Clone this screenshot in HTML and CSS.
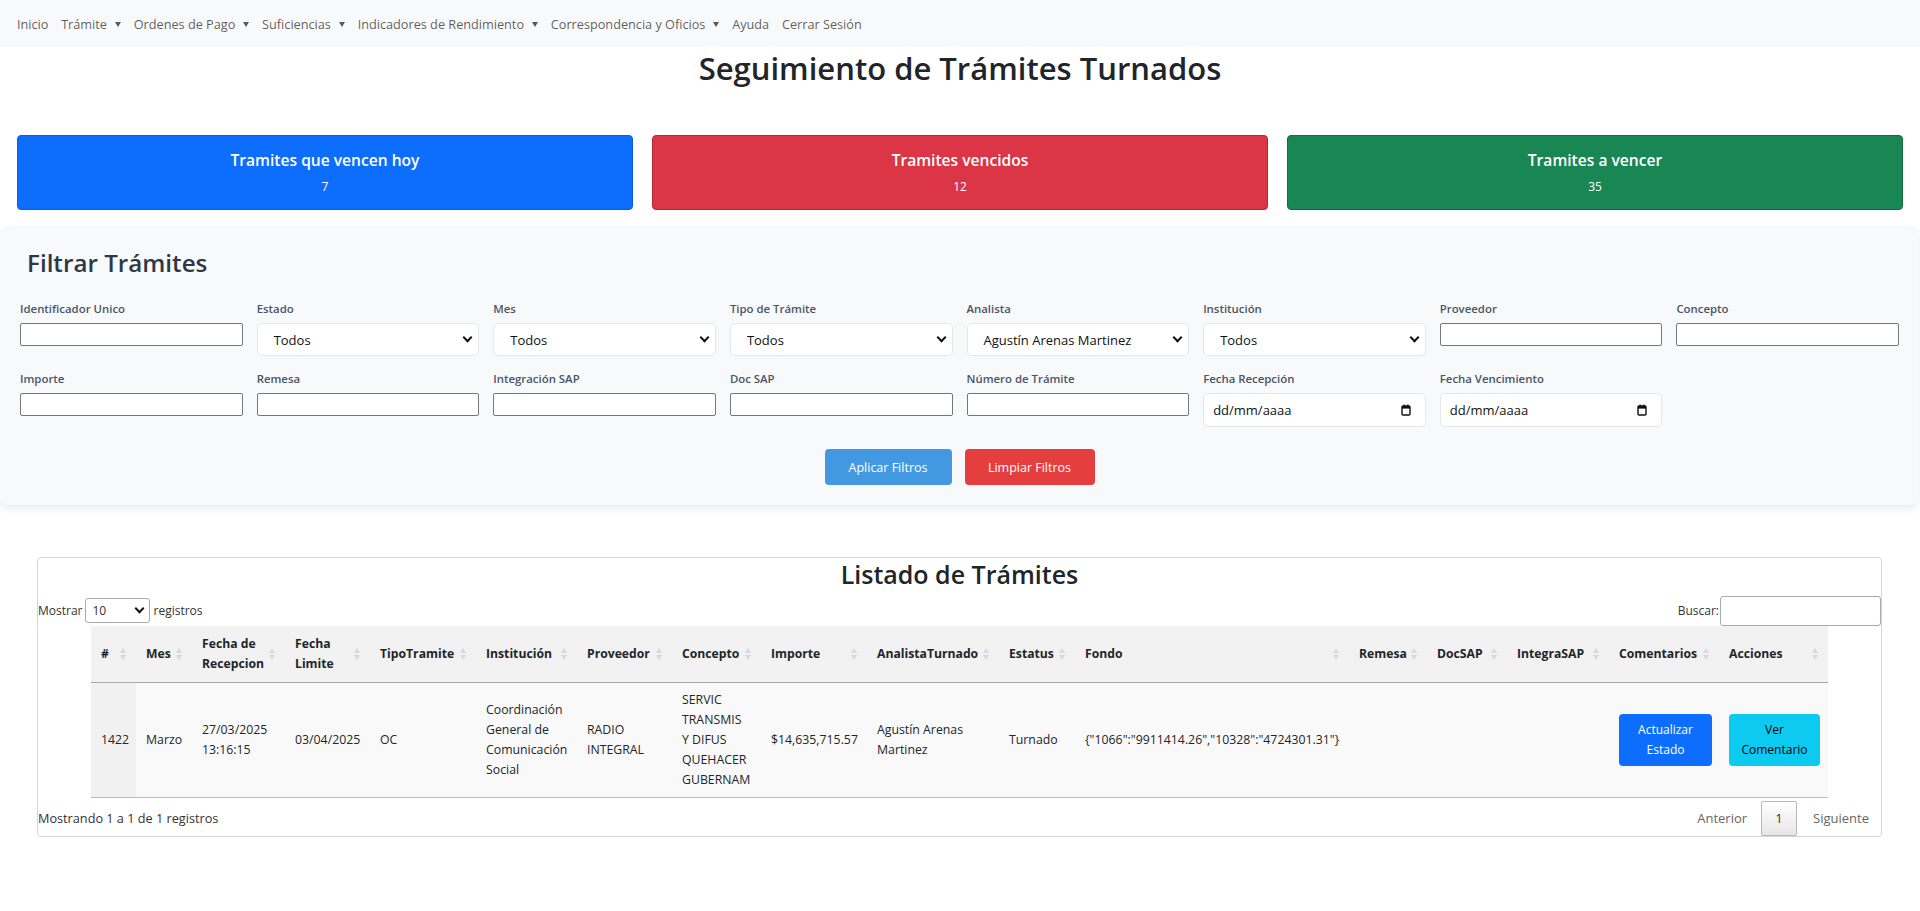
FILE: index.html
```html
<!DOCTYPE html>
<html lang="es">
<head>
<meta charset="utf-8">
<title>Seguimiento de Trámites Turnados</title>
<link rel="stylesheet" href="styles.css">
</head>
<body>
<nav class="topnav">
  <a class="nav-link">Inicio</a>
  <a class="nav-link caret">Trámite</a>
  <a class="nav-link caret">Ordenes de Pago</a>
  <a class="nav-link caret">Suficiencias</a>
  <a class="nav-link caret">Indicadores de Rendimiento</a>
  <a class="nav-link caret">Correspondencia y Oficios</a>
  <a class="nav-link">Ayuda</a>
  <a class="nav-link">Cerrar Sesión</a>
</nav>

<h1 class="page-title">Seguimiento de Trámites Turnados</h1>

<section class="stats">
  <div class="stat stat-blue"><h5 class="stat-title">Tramites que vencen hoy</h5><p class="stat-num">7</p></div>
  <div class="stat stat-red"><h5 class="stat-title">Tramites vencidos</h5><p class="stat-num">12</p></div>
  <div class="stat stat-green"><h5 class="stat-title">Tramites a vencer</h5><p class="stat-num">35</p></div>
</section>

<section class="filters">
  <h2 class="filters-title">Filtrar Trámites</h2>
  <div class="filter-grid">
    <div class="field"><label class="flabel">Identificador Unico</label><input class="tinput" type="text"></div>
    <div class="field"><label class="flabel">Estado</label><div class="fselect"><span>Todos</span></div></div>
    <div class="field"><label class="flabel">Mes</label><div class="fselect"><span>Todos</span></div></div>
    <div class="field"><label class="flabel">Tipo de Trámite</label><div class="fselect"><span>Todos</span></div></div>
    <div class="field"><label class="flabel">Analista</label><div class="fselect"><span>Agustín Arenas Martinez</span></div></div>
    <div class="field"><label class="flabel">Institución</label><div class="fselect"><span>Todos</span></div></div>
    <div class="field"><label class="flabel">Proveedor</label><input class="tinput" type="text"></div>
    <div class="field"><label class="flabel">Concepto</label><input class="tinput" type="text"></div>

    <div class="field"><label class="flabel">Importe</label><input class="tinput" type="text"></div>
    <div class="field"><label class="flabel">Remesa</label><input class="tinput" type="text"></div>
    <div class="field"><label class="flabel">Integración SAP</label><input class="tinput" type="text"></div>
    <div class="field"><label class="flabel">Doc SAP</label><input class="tinput" type="text"></div>
    <div class="field"><label class="flabel">Número de Trámite</label><input class="tinput" type="text"></div>
    <div class="field"><label class="flabel">Fecha Recepción</label>
      <div class="fdate"><span>dd/mm/aaaa</span>
        <svg class="cal" width="10" height="12" viewBox="0 0 10 12"><rect x="1" y="2" width="8" height="9" rx="1" fill="none" stroke="#111" stroke-width="1.4"/><rect x="1" y="2" width="8" height="2.6" fill="#111"/><rect x="2.5" y="0.5" width="1.2" height="2" fill="#111"/><rect x="6.3" y="0.5" width="1.2" height="2" fill="#111"/></svg>
      </div>
    </div>
    <div class="field"><label class="flabel">Fecha Vencimiento</label>
      <div class="fdate"><span>dd/mm/aaaa</span>
        <svg class="cal" width="10" height="12" viewBox="0 0 10 12"><rect x="1" y="2" width="8" height="9" rx="1" fill="none" stroke="#111" stroke-width="1.4"/><rect x="1" y="2" width="8" height="2.6" fill="#111"/><rect x="2.5" y="0.5" width="1.2" height="2" fill="#111"/><rect x="6.3" y="0.5" width="1.2" height="2" fill="#111"/></svg>
      </div>
    </div>
  </div>
  <div class="filter-actions">
    <button class="btn btn-apply">Aplicar Filtros</button>
    <button class="btn btn-clear">Limpiar Filtros</button>
  </div>
</section>

<section class="list-card">
  <h2 class="list-title">Listado de Trámites</h2>
  <div class="dt-top">
    <div class="dt-length">Mostrar <span class="len-select">10</span> registros</div>
    <div class="dt-search">Buscar:<input class="search-input" type="text"></div>
  </div>
  <table class="dt">
    <colgroup>
      <col style="width:45px"><col style="width:56px"><col style="width:93px"><col style="width:85px">
      <col style="width:106px"><col style="width:101px"><col style="width:95px"><col style="width:89px">
      <col style="width:106px"><col style="width:132px"><col style="width:76px"><col style="width:274px">
      <col style="width:78px"><col style="width:80px"><col style="width:102px"><col style="width:110px"><col style="width:109px">
    </colgroup>
    <thead>
      <tr>
        <th>#</th><th>Mes</th><th>Fecha de Recepcion</th><th>Fecha Limite</th><th>TipoTramite</th>
        <th>Institución</th><th>Proveedor</th><th>Concepto</th><th>Importe</th><th>AnalistaTurnado</th>
        <th>Estatus</th><th>Fondo</th><th>Remesa</th><th>DocSAP</th><th>IntegraSAP</th><th>Comentarios</th><th>Acciones</th>
      </tr>
    </thead>
    <tbody>
      <tr>
        <td class="sorted">1422</td>
        <td>Marzo</td>
        <td>27/03/2025 13:16:15</td>
        <td>03/04/2025</td>
        <td>OC</td>
        <td>Coordinación General de Comunicación Social</td>
        <td>RADIO INTEGRAL</td>
        <td class="concept">SERVIC TRANSMIS Y DIFUS QUEHACER GUBERNAM</td>
        <td>$14,635,715.57</td>
        <td>Agustín Arenas Martinez</td>
        <td>Turnado</td>
        <td>{"1066":"9911414.26","10328":"4724301.31"}</td>
        <td></td>
        <td></td>
        <td></td>
        <td><button class="rbtn rbtn-primary">Actualizar Estado</button></td>
        <td><button class="rbtn rbtn-info">Ver Comentario</button></td>
      </tr>
    </tbody>
  </table>
  <div class="dt-bottom">
    <div class="dt-info">Mostrando 1 a 1 de 1 registros</div>
    <div class="dt-pager">
      <span class="pg pg-prev">Anterior</span>
      <span class="pg pg-current">1</span>
      <span class="pg pg-next">Siguiente</span>
    </div>
  </div>
</section>
</body>
</html>
```

FILE: styles.css
```css
* { box-sizing: border-box; }

body {
  margin: 0;
  font-family: "Open Sans", "Noto Sans", sans-serif;
  color: #212529;
  background: #fff;
  font-size: 14px;
}

/* ---------- navbar ---------- */
.topnav {
  height: 47px;
  background: #f8f9fa;
  display: flex;
  align-items: center;
  padding: 0 10.5px;
}
.nav-link {
  color: rgba(0, 0, 0, 0.65);
  font-size: 12.7px;
  padding: 0 6.4px;
  white-space: nowrap;
}
.caret::after {
  content: "";
  display: inline-block;
  margin-left: 8px;
  vertical-align: 2px;
  border-top: 5px solid rgba(0, 0, 0, 0.65);
  border-left: 3px solid transparent;
  border-right: 3px solid transparent;
}

/* ---------- title ---------- */
.page-title {
  margin: 3px 0 0;
  text-align: center;
  font-size: 31px;
  line-height: 36px;
  font-weight: 600;
  color: #212529;
}

/* ---------- stat cards ---------- */
.stats {
  display: grid;
  grid-template-columns: repeat(3, 1fr);
  gap: 19px;
  padding: 0 17px;
  margin-top: 49px;
}
.stat {
  height: 75px;
  border-radius: 4px;
  color: #fff;
  text-align: center;
  padding-top: 12px;
}
.stat-blue { background: #0d6efd; border: 1px solid #0b5ed7; }
.stat-red { background: #dc3545; border: 1px solid #b02a37; }
.stat-green { background: #198754; border: 1px solid #146c43; }
.stat-title {
  margin: 0;
  font-size: 15.6px;
  line-height: 24px;
  font-weight: 600;
}
.stat-num {
  margin: 7px 0 0;
  font-size: 12px;
  line-height: 16px;
}

/* ---------- filters ---------- */
.filters {
  margin: 16px 2px 0 0;
  background: #f8f9fa;
  border-radius: 8px;
  box-shadow: 0 4px 8px rgba(0, 0, 0, 0.08);
  padding: 20px 19px 20px 20px;
}
.filters-title {
  margin: 0 0 21px 7px;
  font-size: 24.2px;
  line-height: 34px;
  font-weight: 600;
  color: #2d3748;
}
.filter-grid {
  display: grid;
  grid-template-columns: repeat(8, 1fr);
  column-gap: 14px;
  row-gap: 15px;
  align-items: start;
}
.field { display: flex; flex-direction: column; }
.flabel {
  font-size: 11.4px;
  line-height: 16px;
  font-weight: 600;
  color: #4a5568;
  margin-bottom: 6px;
}
.tinput {
  height: 23px;
  border: 1px solid #767676;
  border-radius: 2px;
  background: #fff;
  font: inherit;
  width: 100%;
}
.fselect,
.fdate {
  height: 33px;
  border: 1px solid #e2e8f0;
  border-radius: 5px;
  background: #fff;
  display: flex;
  align-items: center;
  justify-content: space-between;
  padding: 0 6px 0 16px;
  font-size: 13px;
  color: #111;
}
.fselect::after {
  content: "";
  width: 5px;
  height: 5px;
  border-right: 2px solid #111;
  border-bottom: 2px solid #111;
  transform: rotate(45deg);
  margin: 0 1px 4px 0;
}
.fdate { height: 34px; padding: 0 14px 0 9px; }

.filter-actions {
  display: flex;
  justify-content: center;
  gap: 13px;
  margin-top: 22px;
}
.btn {
  height: 36px;
  border: 0;
  border-radius: 4px;
  color: #fff;
  font: inherit;
  font-size: 12.5px;
  padding: 0 22px;
}
.btn-apply { background: #4299e1; width: 127px; }
.btn-clear { background: #e53e3e; width: 130px; }

/* ---------- list card ---------- */
.list-card {
  margin: 52px 38px 0 37px;
  border: 1px solid #d6d6d6;
  border-radius: 4px;
  font-size: 12px;
}
.list-title {
  margin: 0;
  padding-top: 2px;
  text-align: center;
  font-size: 25px;
  line-height: 28px;
  font-weight: 600;
  color: #212529;
}
.dt-top {
  display: flex;
  justify-content: space-between;
  align-items: center;
  margin-top: 7px;
  height: 31px;
}
.dt-length, .dt-search { display: flex; align-items: center; color: #333; }
.len-select {
  display: inline-flex;
  align-items: center;
  justify-content: space-between;
  width: 65px;
  height: 25px;
  margin: 0 3px 0 3px;
  padding: 0 6px 0 6px;
  border: 1px solid #aaa;
  border-radius: 3px;
  background: #fff;
}
.len-select::after {
  content: "";
  width: 5px;
  height: 5px;
  border-right: 2px solid #111;
  border-bottom: 2px solid #111;
  transform: rotate(45deg);
  margin-bottom: 4px;
}
.search-input {
  width: 161px;
  height: 30px;
  margin-left: 1px;
  border: 1px solid #aaa;
  border-radius: 3px;
  background: #fff;
}

/* table */
.dt {
  width: 1737px;
  margin: 0 auto;
  border-collapse: collapse;
  table-layout: fixed;
  font-size: 12.3px;
  line-height: 20px;
}
.dt th {
  background: #f2f2f2;
  text-align: left;
  font-weight: 700;
  font-size: 12.2px;
  padding: 8px 18px 8px 10px;
  border-bottom: 1px solid #a8a8a8;
  vertical-align: middle;
  position: relative;
  color: #212529;
}
.dt th::before,
.dt th::after {
  content: "";
  position: absolute;
  right: 10px;
  border-left: 3px solid transparent;
  border-right: 3px solid transparent;
}
.dt th::before { top: calc(50% - 6px); border-bottom: 5px solid #d9d9d9; }
.dt th::after { top: calc(50% + 1px); border-top: 5px solid #d9d9d9; }
.dt td {
  background: #f9f9f9;
  padding: 7px 10px 7px;
  vertical-align: middle;
  border-bottom: 1px solid #bdbdbd;
  color: #212529;
}
.dt td.sorted { background: #f1f1f1; }
.dt td.concept { padding-right: 14px; }

.rbtn {
  border: 0;
  border-radius: 4px;
  font: inherit;
  font-size: 12px;
  line-height: 20px;
  padding: 6px 8px;
  height: 52px;
  cursor: pointer;
}
.rbtn-primary { background: #0d6efd; color: #fff; width: 93px; }
.rbtn-info { background: #0dcaf0; color: #000; width: 91px; }

.dt-bottom {
  display: flex;
  justify-content: space-between;
  align-items: flex-end;
  height: 38px;
  font-size: 12.7px;
  line-height: 17px;
}
.dt-info { color: #333; padding-bottom: 9px; }
.dt-pager { display: flex; align-items: flex-end; font-size: 13px; }
.pg { color: #666; padding-bottom: 9px; }
.pg-prev { padding-right: 14px; }
.pg-next { padding-left: 16px; padding-right: 12px; }
.pg-current {
  color: #333;
  border: 1px solid #b9b9b9;
  border-radius: 2px;
  background: linear-gradient(#fff, #e6e6e6);
  width: 36px;
  height: 35px;
  padding: 0;
  display: flex;
  align-items: center;
  justify-content: center;
}
```
